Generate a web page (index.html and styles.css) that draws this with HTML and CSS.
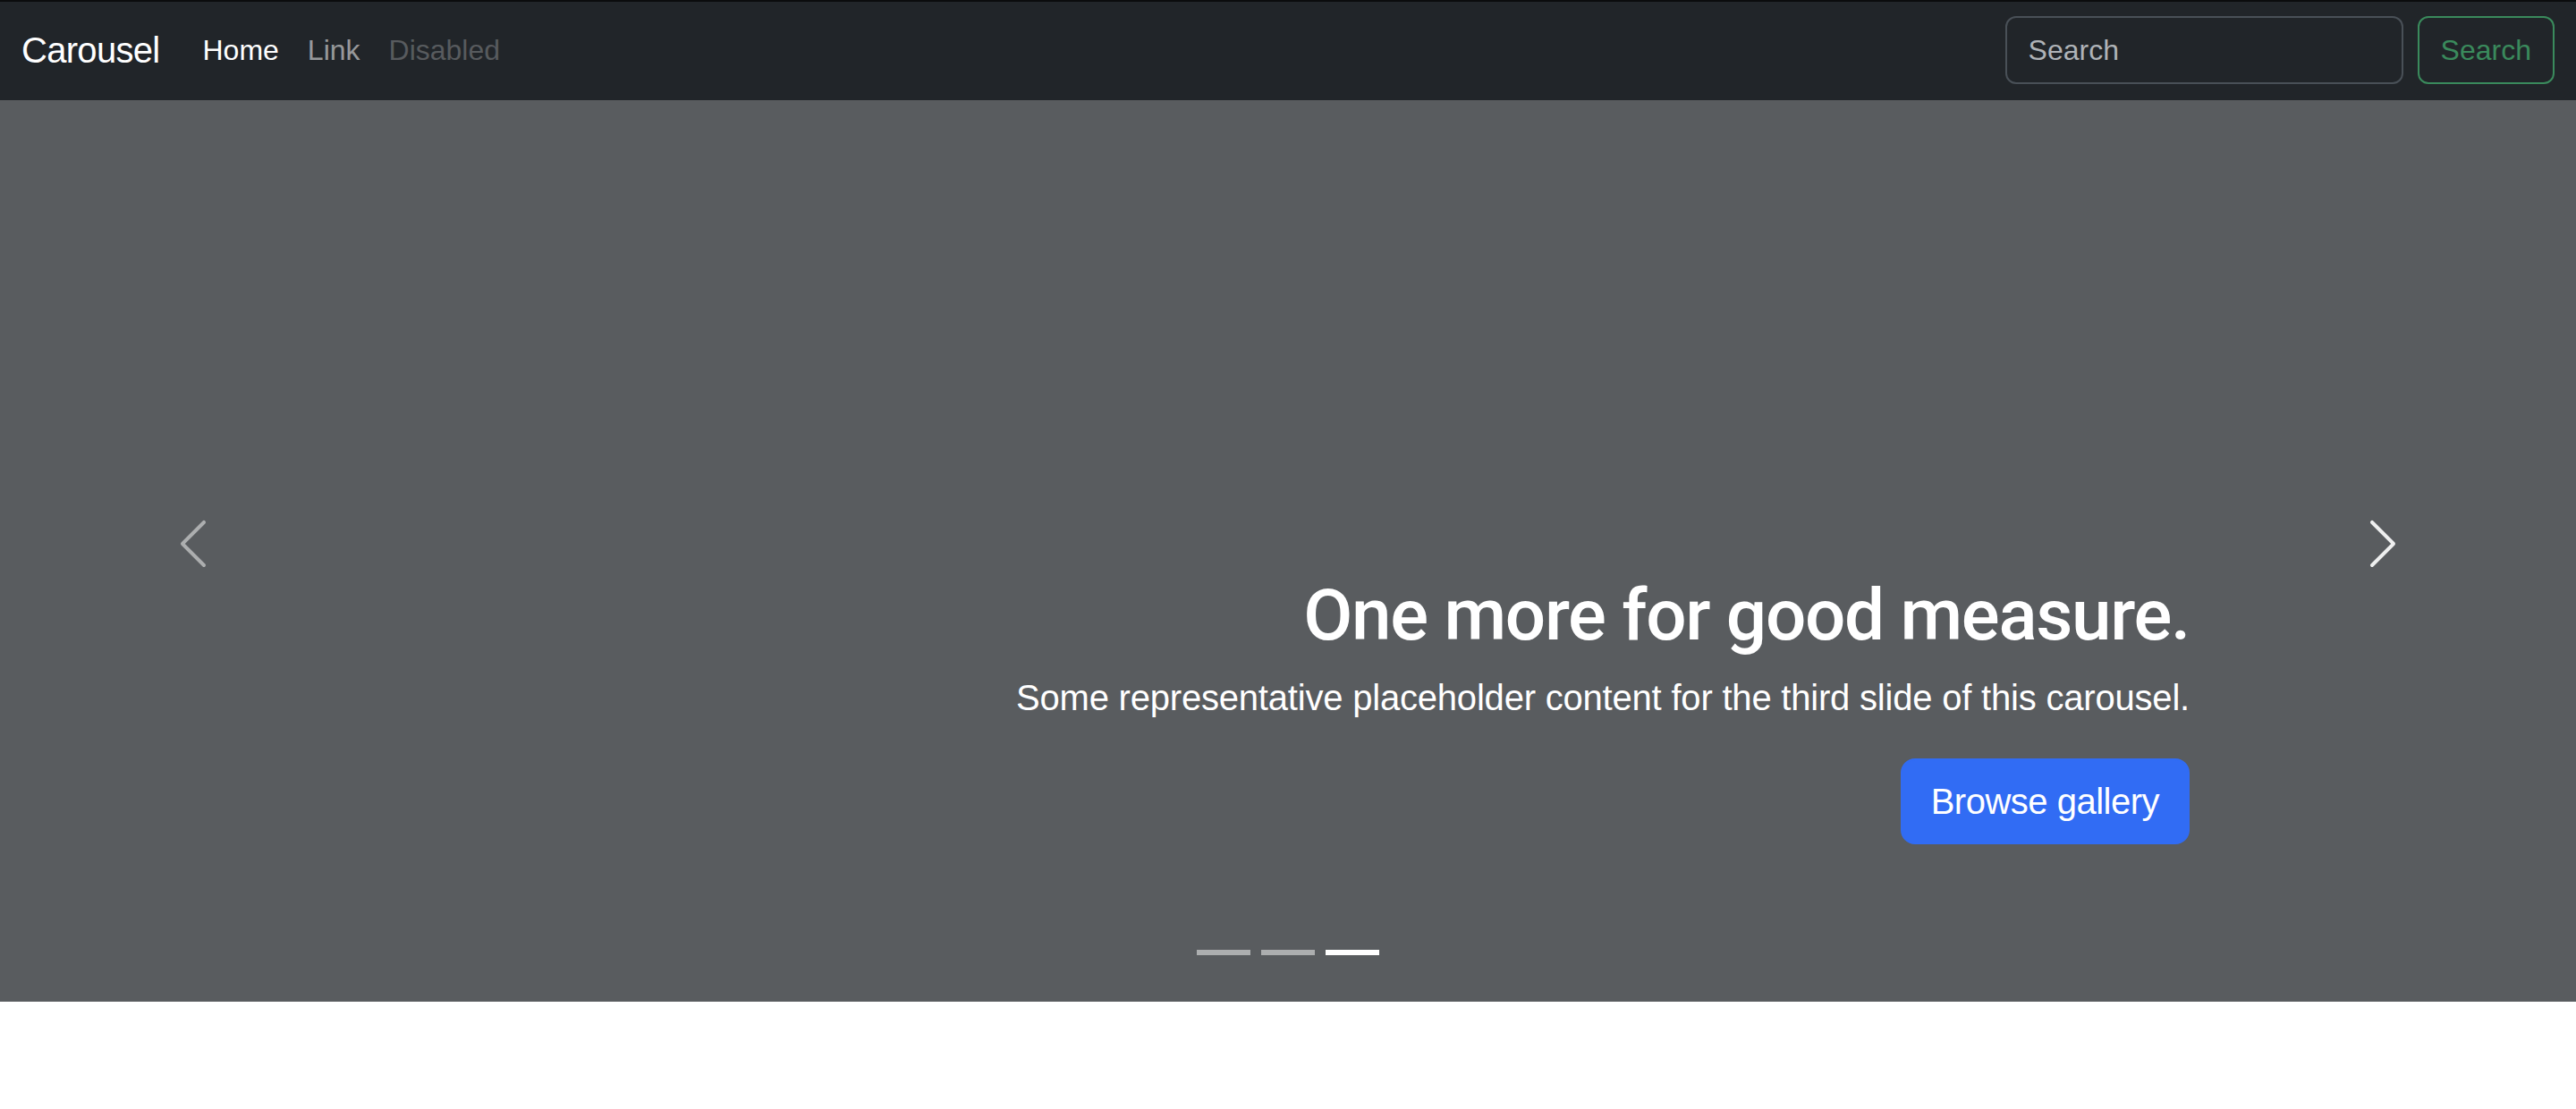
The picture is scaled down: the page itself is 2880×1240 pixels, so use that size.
FILE: index.html
```
<!DOCTYPE html>
<html lang="en">
<head>
<meta charset="utf-8">
<title>Carousel</title>
<link rel="stylesheet" href="styles.css">
</head>
<body>
<header>
  <nav class="navbar">
    <div class="nav-inner">
      <a class="brand" href="#">Carousel</a>
      <div class="nav-collapse">
        <ul class="nav-list">
          <li><a class="nav-link active" href="#">Home</a></li>
          <li><a class="nav-link" href="#">Link</a></li>
          <li><a class="nav-link disabled">Disabled</a></li>
        </ul>
        <form class="search-form">
          <input class="search-input" type="search" placeholder="Search" aria-label="Search">
          <button class="btn-outline-success" type="button">Search</button>
        </form>
      </div>
    </div>
  </nav>
</header>
<main>
  <div class="carousel">
    <div class="carousel-item">
      <div class="caption">
        <h1 class="caption-title">One more for good measure.</h1>
        <p class="caption-text">Some representative placeholder content for the third slide of this carousel.</p>
        <div class="caption-actions"><a class="btn-primary" href="#">Browse gallery</a></div>
      </div>
    </div>
    <div class="indicators">
      <button class="indicator" type="button" aria-label="Slide 1"></button>
      <button class="indicator" type="button" aria-label="Slide 2"></button>
      <button class="indicator active" type="button" aria-label="Slide 3"></button>
    </div>
    <button class="control control-prev" type="button" aria-label="Previous">
      <svg class="control-icon" viewBox="0 0 16 16" fill="#fff"><path d="M11.354 1.646a.5.5 0 0 1 0 .708L5.707 8l5.647 5.646a.5.5 0 0 1-.708.708l-6-6a.5.5 0 0 1 0-.708l6-6a.5.5 0 0 1 .708 0z"/></svg>
    </button>
    <button class="control control-next" type="button" aria-label="Next">
      <svg class="control-icon" viewBox="0 0 16 16" fill="#fff"><path d="M4.646 1.646a.5.5 0 0 1 .708 0l6 6a.5.5 0 0 1 0 .708l-6 6a.5.5 0 0 1-.708-.708L10.293 8 4.646 2.354a.5.5 0 0 1 0-.708z"/></svg>
    </button>
  </div>
</main>
</body>
</html>
```
FILE: styles.css
```
* { box-sizing: border-box; }

html, body {
  margin: 0;
  background: #fff;
}

body {
  padding-top: 96px;
  font-family: "Liberation Sans", Arial, sans-serif;
  font-size: 32px;
  line-height: 1.5;
  color: #212529;
}

.navbar {
  position: fixed;
  top: 0;
  left: 0;
  right: 0;
  z-index: 20;
  background: #212529;
  box-shadow: inset 0 2px 0 #0b0c0d;
  padding: 16px 0;
}

.nav-inner {
  display: flex;
  align-items: center;
  padding: 0 24px;
}

.brand {
  padding: 10px 0;
  margin-right: 32px;
  font-size: 40px;
  line-height: 60px;
  letter-spacing: -0.7px;
  color: #fff;
  text-decoration: none;
  white-space: nowrap;
}

.nav-collapse {
  flex: 1;
  display: flex;
  align-items: center;
}

.nav-list {
  display: flex;
  list-style: none;
  margin: 0 auto 0 0;
  padding: 0;
}

.nav-link {
  display: block;
  padding: 16px;
  font-size: 32px;
  line-height: 48px;
  color: rgba(255, 255, 255, 0.55);
  text-decoration: none;
}

.nav-link.active { color: #fff; }
.nav-link.disabled { color: rgba(255, 255, 255, 0.25); }

.search-form {
  display: flex;
  align-items: center;
}

.search-input {
  width: 445px;
  height: 76px;
  margin-right: 16px;
  padding: 12px 24px;
  font-family: inherit;
  font-size: 32px;
  line-height: 48px;
  color: #dee2e6;
  background: #212529;
  border: 2px solid #495057;
  border-radius: 12px;
  outline: none;
}

.search-input::placeholder { color: #afb3b7; }

.btn-outline-success {
  height: 76px;
  padding: 12px 24px;
  font-family: inherit;
  font-size: 32px;
  line-height: 48px;
  color: #3a8a5c;
  background: transparent;
  border: 2px solid #3a8a5c;
  border-radius: 12px;
}

.carousel {
  position: relative;
  height: 1024px;
  margin-bottom: 128px;
  background: #595c5f;
  overflow: hidden;
}

.carousel-item {
  position: relative;
  height: 100%;
}

.caption {
  position: absolute;
  left: 15%;
  right: 15%;
  bottom: 96px;
  padding: 40px 0;
  color: #fff;
  text-align: right;
  z-index: 10;
}

.caption-title {
  margin: 0 0 16px;
  font-family: Roboto, "Liberation Sans", sans-serif;
  font-size: 80px;
  font-weight: 500;
  line-height: 1.2;
  letter-spacing: -1.3px;
}

.caption-text {
  margin: 0 0 40px;
  font-size: 40px;
  line-height: 1.4;
  letter-spacing: -0.2px;
}

.caption-actions {
  display: flex;
  justify-content: flex-end;
  margin-bottom: 40px;
}

.btn-primary {
  display: inline-block;
  padding: 16px 32px;
  font-size: 40px;
  line-height: 60px;
  letter-spacing: -0.5px;
  color: #fff;
  background: #316cf4;
  border: 2px solid #316cf4;
  border-radius: 16px;
  text-decoration: none;
}

.indicators {
  position: absolute;
  left: 0;
  right: 0;
  bottom: 0;
  z-index: 12;
  display: flex;
  justify-content: center;
  margin: 0 15% 32px;
}

.indicator {
  box-sizing: content-box;
  width: 60px;
  height: 6px;
  margin: 0 6px;
  padding: 0;
  border: 0;
  border-top: 20px solid transparent;
  border-bottom: 20px solid transparent;
  background-color: #fff;
  background-clip: padding-box;
  opacity: 0.5;
}

.indicator.active { opacity: 1; }

.control {
  position: absolute;
  top: 0;
  bottom: 0;
  z-index: 11;
  width: 15%;
  display: flex;
  align-items: center;
  justify-content: center;
  padding: 0;
  border: 0;
  background: none;
  opacity: 0.5;
}

.control-prev { left: 0; }
.control-next { right: 0; opacity: 0.9; }

.control-icon {
  width: 64px;
  height: 64px;
}
```
